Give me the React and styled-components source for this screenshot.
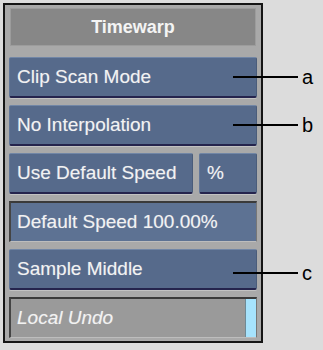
import React from 'react'
import styled, { createGlobalStyle } from 'styled-components'

const GlobalStyle = createGlobalStyle`
  html, body {
    margin: 0;
    padding: 0;
    background: #dcdcdc;
  }
  body {
    font-family: "Liberation Sans", Arial, sans-serif;
  }
`

const callouts = [
  { label: 'a', y: 77 },
  { label: 'b', y: 125 },
  { label: 'c', y: 273 },
]

const App = () => {
  return (
    <Page>
      <GlobalStyle />
      <Panel>
        <TitleBar>Timewarp</TitleBar>
        <Stack>
          <Button>Clip Scan Mode</Button>
          <Button>No Interpolation</Button>
          <Row>
            <Button>Use Default Speed</Button>
            <Button>%</Button>
          </Row>
          <Field>Default Speed 100.00%</Field>
          <Button>Sample Middle</Button>
          <Field grey>
            <UndoText>Local Undo</UndoText>
            <UndoMeter />
          </Field>
        </Stack>
      </Panel>
      {callouts.map((c) => (
        <Callout key={c.label} style={{ top: c.y }}>
          <Leader />
          <Letter>{c.label}</Letter>
        </Callout>
      ))}
    </Page>
  )
}

export default App

const Page = styled.div`
  position: relative;
  width: 323px;
  height: 350px;
  padding: 3px;
  box-sizing: border-box;
`

const Panel = styled.div`
  width: 260px;
  box-sizing: border-box;
  border: 2px solid #151515;
  background: #a9a9a9;
  padding: 3px 4px 3px 4px;
`

const TitleBar = styled.div`
  height: 38px;
  margin: 0 1px;
  box-sizing: border-box;
  border: 1px solid #9c9c9c;
  background: #878787;
  color: #f4f4f4;
  font-weight: bold;
  font-size: 18px;
  display: flex;
  align-items: center;
  justify-content: center;
`

const Stack = styled.div`
  display: flex;
  flex-direction: column;
  gap: 7px;
  margin-top: 11px;
`

const Row = styled.div`
  display: grid;
  grid-template-columns: 184px 1fr;
  gap: 6px;
`

const Button = styled.div`
  height: 41px;
  box-sizing: border-box;
  display: flex;
  align-items: center;
  padding: 0 7px;
  background: #566a8b;
  border-top: 1px solid #7186a6;
  border-left: 1px solid #62779a;
  border-right: 1px solid #4a5c7a;
  border-bottom: 2px solid #25244d;
  border-radius: 2px;
  box-shadow: 0 1px 0 #c2c2c2;
  color: #f2f2f2;
  font-size: 19px;
  text-shadow: 0 0 1px rgba(255, 255, 255, 0.35);
  white-space: nowrap;
`

const Field = styled.div`
  position: relative;
  height: 41px;
  box-sizing: border-box;
  display: flex;
  align-items: center;
  padding: 0 6px;
  background: ${(p) => (p.grey ? '#9a9a9a' : '#5d7293')};
  border-top: 2px solid #3a3a3a;
  border-left: 2px solid #444;
  border-right: 1px solid #777;
  border-bottom: 1px solid #bdbdbd;
  color: #f2f2f2;
  font-size: 19px;
  text-shadow: 0 0 1px rgba(255, 255, 255, 0.35);
  white-space: nowrap;
`

const UndoText = styled.span`
  font-style: italic;
`

const UndoMeter = styled.div`
  position: absolute;
  top: 0;
  right: 0;
  bottom: 0;
  width: 10px;
  background: #a6e3fd;
  border-left: 1px solid #6f8a96;
`

const Callout = styled.div`
  position: absolute;
  left: 233px;
  display: flex;
  align-items: center;
  gap: 4px;
  transform: translateY(-50%);
`

const Leader = styled.div`
  width: 65px;
  height: 2px;
  background: #000;
`

const Letter = styled.span`
  font-size: 20px;
  color: #000;
  line-height: 1;
`
